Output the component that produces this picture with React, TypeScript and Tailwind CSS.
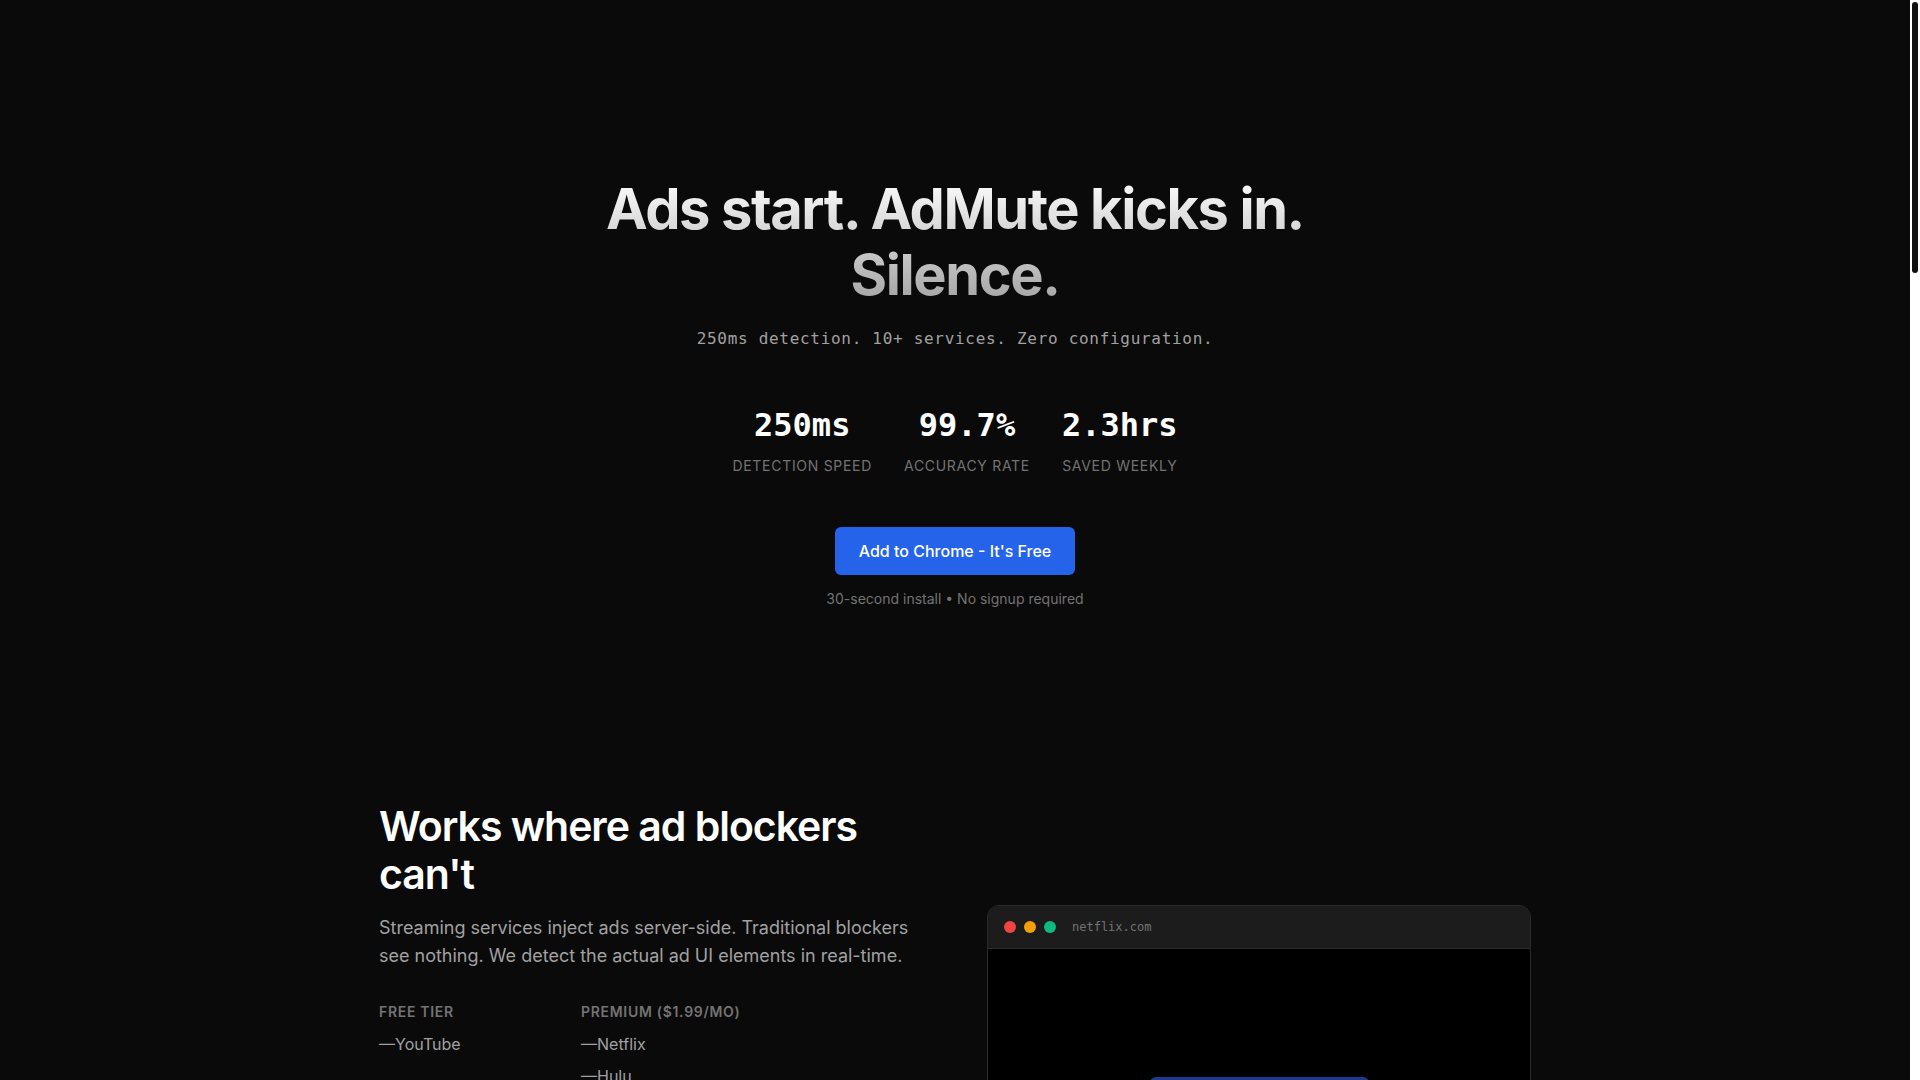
import React from 'react';

const stats = [
  { value: '250ms', label: 'Detection Speed' },
  { value: '99.7%', label: 'Accuracy Rate' },
  { value: '2.3hrs', label: 'Saved Weekly' },
];

const freeTier = ['YouTube'];
const premiumTier = ['Netflix', 'Hulu', 'Disney+', 'Max', 'Prime Video', 'Peacock', 'Paramount+', 'Spotify'];

const sans = { fontFamily: 'Inter, "Noto Sans", sans-serif' };

export default function App() {
  return (
    <div className="flex h-screen bg-[#0a0a0a] text-white" style={sans}>
      <main className="flex-1 overflow-y-auto [scrollbar-width:none]">
        {/* hero */}
        <section className="flex flex-col items-center pt-[176px] pb-24 text-center">
          <h1 className="bg-gradient-to-b from-white to-neutral-400 bg-clip-text text-[56px] leading-[66px] font-bold tracking-tight text-transparent">
            Ads start. AdMute kicks in.
            <br />
            Silence.
          </h1>
          <p className="mt-[19px] font-['DejaVu_Sans_Mono',monospace] text-base tracking-[0.7px] text-neutral-400">
            250ms detection. 10+ services. Zero configuration.
          </p>

          <div className="mt-14 flex gap-8">
            {stats.map((s) => (
              <div key={s.label} className="flex flex-col items-center">
                <div className="font-['DejaVu_Sans_Mono',monospace] text-[32px] leading-9 font-bold text-white">{s.value}</div>
                <div className="mt-[13px] text-sm tracking-wider text-neutral-500 uppercase">{s.label}</div>
              </div>
            ))}
          </div>

          <button className="mt-[51px] rounded-md bg-[#2563eb] px-6 py-3 text-base font-medium text-white hover:bg-blue-700">
            Add to Chrome - It's Free
          </button>
          <p className="mt-[14px] text-sm text-neutral-500">30-second install • No signup required</p>
        </section>

        {/* how it works */}
        <section className="pt-[97px] pb-[2600px]">
          <div className="mx-auto grid max-w-6xl grid-cols-2 items-start gap-16">
            <div>
              <h2 className="text-[41px] leading-[48px] font-semibold tracking-tight text-white">
                Works where ad blockers can't
              </h2>
              <p className="mt-4 text-lg text-neutral-400">
                Streaming services inject ads server-side. Traditional blockers see nothing. We detect the actual ad UI
                elements in real-time.
              </p>

              <div className="mt-8 flex">
                <div className="w-[202px]">
                  <h3 className="text-sm font-semibold tracking-wider text-neutral-500 uppercase">Free Tier</h3>
                  <ul className="mt-[10px] space-y-2 text-base text-neutral-400">
                    {freeTier.map((n) => (
                      <li key={n}>—{n}</li>
                    ))}
                  </ul>
                </div>
                <div>
                  <h3 className="text-sm font-semibold tracking-wider text-neutral-500 uppercase">Premium ($1.99/mo)</h3>
                  <ul className="mt-[10px] space-y-2 text-base text-neutral-400">
                    {premiumTier.map((n) => (
                      <li key={n}>—{n}</li>
                    ))}
                  </ul>
                </div>
              </div>
            </div>

            <div className="pt-[103px]">
              <div className="overflow-hidden rounded-xl border border-[#2a2a2a]">
                <div className="flex items-center gap-2 border-b border-[#2a2a2a] bg-[#1c1c1c] px-4 py-[13px]">
                  <span className="h-3 w-3 rounded-full bg-[#ef4444]" />
                  <span className="h-3 w-3 rounded-full bg-[#f59e0b]" />
                  <span className="h-3 w-3 rounded-full bg-[#10b981]" />
                  <span className="ml-2 font-['DejaVu_Sans_Mono',monospace] text-xs text-neutral-500">netflix.com</span>
                </div>
                <div className="flex aspect-video items-center justify-center bg-black">
                  <div className="flex h-12 w-[219px] items-center justify-center rounded-md bg-[#1e3a8a] text-sm text-white">
                    Ad detected — muted
                  </div>
                </div>
              </div>
            </div>
          </div>
        </section>
      </main>

      {/* scrollbar */}
      <aside className="w-[10px] shrink-0 bg-white px-[2px] pt-[2px]">
        <div className="h-[271px] rounded-full bg-[#111111]" />
      </aside>
    </div>
  );
}
